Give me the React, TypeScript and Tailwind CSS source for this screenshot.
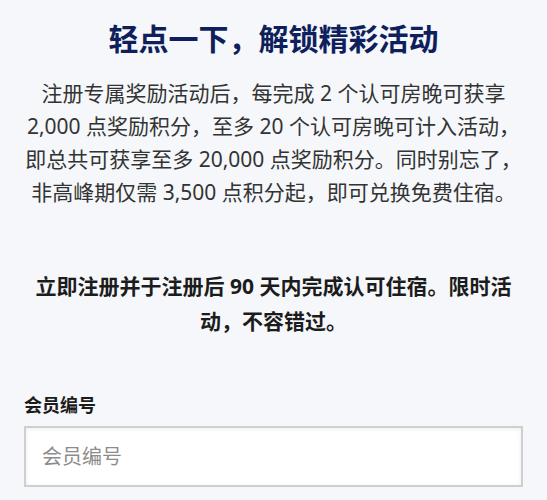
export default function App() {
    return (
        <div className="min-h-screen bg-[#f5f7fa] px-6 pt-[19px] font-['Noto_Sans','Noto_Sans_CJK_SC',sans-serif]">
            <h1 className="text-center text-[30px] leading-[40px] font-bold text-[#0f1f5c]">
                轻点一下，解锁精彩活动
            </h1>
            <p className="mt-[18px] text-center text-[21px] leading-[33px] text-[#333333]">
                注册专属奖励活动后，每完成 2 个认可房晚可获享 2,000 点奖励积分，至多 20 个认可房晚可计入活动，即总共可获享至多 20,000 点奖励积分。同时别忘了，非高峰期仅需 3,500 点积分起，即可兑换免费住宿。
            </p>
            <p className="mt-[60px] text-center text-[21px] leading-[35px] font-bold text-[#1c1c1c]">
                立即注册并于注册后 90 天内完成认可住宿。限时活动，不容错过。
            </p>
            <form className="mt-[54px]">
                <label htmlFor="member" className="block text-[18px] leading-[24px] font-bold text-[#1c1c1c]">
                    会员编号
                </label>
                <input
                    id="member"
                    type="text"
                    placeholder="会员编号"
                    className="mt-[9px] block h-[61px] w-full border-2 border-[#cfcfcf] bg-white px-4 text-[20px] text-[#333] placeholder:text-[#8c8c8c] shadow-[inset_0_1px_4px_rgba(0,0,0,0.08)] outline-none"
                />
            </form>
        </div>
    );
}
